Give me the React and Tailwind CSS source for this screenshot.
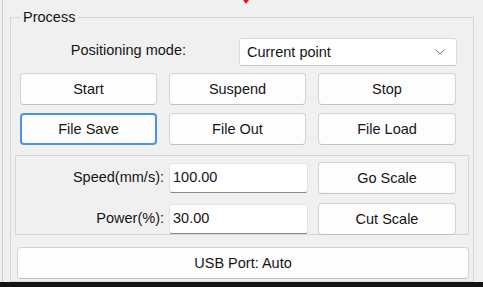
import { ChevronDown } from "lucide-react";

function Btn({ children, focused = false, className = "" }) {
  return (
    <button
      className={`h-[32px] rounded-[4px] bg-[#fdfdfd] text-[14.5px] text-[#151515] pt-[1px] ${
        focused
          ? "border-2 border-[#4a93e4]"
          : "border border-[#d3d3d3] border-b-[#c2c2c2]"
      } ${className}`}
    >
      {children}
    </button>
  );
}

function Field({ label, value }) {
  return (
    <div className="flex items-center h-[31px]">
      <span className="w-[149px] text-right text-[14.5px] text-[#151515] pr-[1px]">{label}</span>
      <div className="ml-[4px] w-[139px] h-[30px] bg-white border border-[#e3e3e3] border-b-[#8a8a8a] rounded-[3px] flex items-center pl-[3px] text-[14.5px] text-[#151515]">
        {value}
      </div>
    </div>
  );
}

export default function App() {
  return (
    <div className="w-[483px] h-[287px] bg-[#f0f0f0] flex flex-col overflow-hidden relative font-['Liberation_Sans',Arial,sans-serif]">
      <div className="absolute left-[243px] top-0 w-0 h-0 border-l-[3px] border-r-[3px] border-t-[4px] border-l-transparent border-r-transparent border-t-[#e8161a]" />
      <div className="h-[282px] overflow-hidden flex">
        <div className="w-[2px] shrink-0" />
        <div className="w-[1px] shrink-0 bg-[#cdcdcd]" />
        <fieldset className="ml-[7px] mt-[9px] w-[464px] border border-[#d8d8d8] pb-[10px] shrink-0">
          <legend className="ml-[9px] px-[3px] text-[14.5px] leading-[16px] text-[#151515]">Process</legend>

          <div className="pl-[9px] pr-[16px]">
            <div className="flex mt-[13px]">
              <span className="w-[166px] text-right text-[14.5px] text-[#151515] pt-[2px]">Positioning mode:</span>
              <div className="ml-auto w-[218px] h-[28px] bg-white border border-[#d9d9d9] border-b-[#c6c6c6] rounded-[3px] flex items-center pl-[7px] pr-[8px] text-[14.5px] text-[#151515]">
                <span className="flex-1 pt-[2px]">Current point</span>
                <ChevronDown size={16} strokeWidth={1.2} className="text-[#555]" />
              </div>
            </div>

            <div className="grid grid-cols-[137px_137px_138px] gap-x-[12px] gap-y-[8px] mt-[7px]">
              <Btn>Start</Btn>
              <Btn>Suspend</Btn>
              <Btn>Stop</Btn>
              <Btn focused>File Save</Btn>
              <Btn>File Out</Btn>
              <Btn>File Load</Btn>
            </div>
          </div>

          <div className="mx-[4px] mt-[10px] h-[80px] border border-[#d6d6d6] pt-[6px] flex flex-col gap-[9px]">
            <div className="flex">
              <Field label="Speed(mm/s):" value="100.00" />
              <Btn className="ml-[10px] w-[138px] h-[31px]">Go Scale</Btn>
            </div>
            <div className="flex">
              <Field label="Power(%):" value="30.00" />
              <Btn className="ml-[10px] w-[138px] h-[31px]">Cut Scale</Btn>
            </div>
          </div>

          <div className="ml-[6px] mr-[4px] mt-[12px]">
            <Btn className="w-full h-[31px]">USB Port: Auto</Btn>
          </div>
        </fieldset>
      </div>
      <div className="flex-1 bg-[#141414]" />
    </div>
  );
}
